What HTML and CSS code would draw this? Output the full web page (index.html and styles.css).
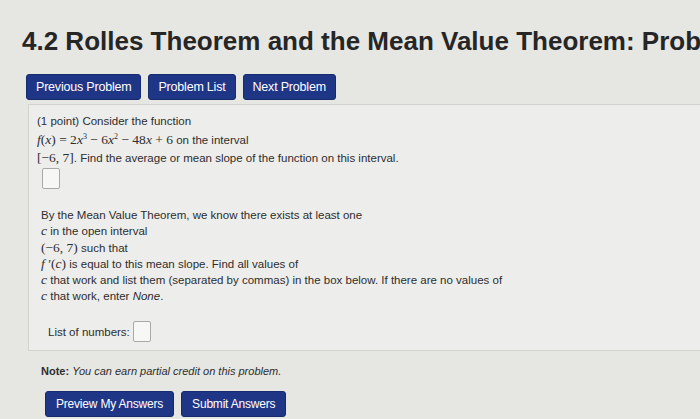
FILE: index.html
```html
<!DOCTYPE html>
<html>
<head>
<meta charset="utf-8">
<link rel="stylesheet" href="styles.css">
</head>
<body>
<div class="page">
  <h1 class="title">4.2 Rolles Theorem and the Mean Value Theorem: Problem 4</h1>
  <div class="nav">
    <button class="btn">Previous Problem</button>
    <button class="btn">Problem List</button>
    <button class="btn">Next Problem</button>
  </div>
  <div class="problem">
    <p class="para first">
      (1 point) Consider the function<br>
      <span class="m"><i>f</i>(<i>x</i>) = 2<i>x</i><sup>3</sup> − 6<i>x</i><sup>2</sup> − 48<i>x</i> + 6</span> on the interval<br>
      <span class="m">[−6, 7]</span>. Find the average or mean slope of the function on this interval.
    </p>
    <div class="answer small"></div>
    <p class="para second">
      By the Mean Value Theorem, we know there exists at least one<br>
      <span class="m"><i>c</i></span> in the open interval<br>
      <span class="m">(−6, 7)</span> such that<br>
      <span class="m"><i>f</i> ′(<i>c</i>)</span> is equal to this mean slope. Find all values of<br>
      <span class="m"><i>c</i></span> that work and list them (separated by commas) in the box below. If there are no values of<br>
      <span class="m"><i>c</i></span> that work, enter <i>None</i>.
    </p>
    <div class="listrow">
      <span>List of numbers:</span>
      <div class="answer"></div>
    </div>
  </div>
  <p class="note"><b>Note:</b> <i>You can earn partial credit on this problem.</i></p>
  <div class="actions">
    <button class="btn big">Preview My Answers</button>
    <button class="btn big">Submit Answers</button>
  </div>
</div>
</body>
</html>
```
FILE: styles.css
```css
html, body {
  margin: 0;
  padding: 0;
  background: #e6e6e3;
  font-family: "Liberation Sans", Arial, sans-serif;
  color: #2e2e2e;
  overflow: hidden;
}
.page {
  width: 700px;
  height: 419px;
  box-sizing: border-box;
  padding: 26px 0 0 22px;
  overflow: hidden;
}
.title {
  margin: 0;
  font-size: 26px;
  line-height: 30px;
  font-weight: bold;
  color: #262626;
  white-space: nowrap;
}
.nav {
  display: flex;
  gap: 7px;
  margin: 18px 0 0 4px;
}
.btn {
  background: #1f3687;
  color: #fff;
  border: 1px solid #162a6e;
  border-radius: 3px;
  font-family: "Liberation Sans", Arial, sans-serif;
  font-size: 12.5px;
  height: 26px;
  padding: 0 9px;
  letter-spacing: -0.2px;
}
.problem {
  margin: 4px 0 0 6px;
  background: #ededeb;
  border: 1px solid #d2d2cf;
  border-right: none;
  padding: 8px 0 8px 8px;
}
.para {
  margin: 0;
  font-size: 11.5px;
}
.first {
  line-height: 17.7px;
}
.second {
  line-height: 16.2px;
  margin-top: 18px;
  padding-left: 4px;
}
.m {
  font-family: "Liberation Serif", "Times New Roman", serif;
  font-size: 13.5px;
}
.m sup {
  font-size: 8px;
  vertical-align: 5px;
  line-height: 0;
}
.answer {
  width: 16px;
  height: 19px;
  border: 1px solid #a9a9a9;
  border-radius: 2px;
  background: #f7f7f5;
}
.answer.small {
  margin: 0 0 0 5px;
}
.listrow {
  display: flex;
  align-items: center;
  gap: 3px;
  margin: 17px 0 0 11px;
  font-size: 11.5px;
}
.note {
  margin: 14px 0 0 19px;
  font-size: 11px;
  line-height: 13px;
}
.actions {
  display: flex;
  gap: 7px;
  margin: 13px 0 0 23px;
}
.btn.big {
  height: 26px;
  padding: 0 10px;
  font-size: 12px;
}
```
